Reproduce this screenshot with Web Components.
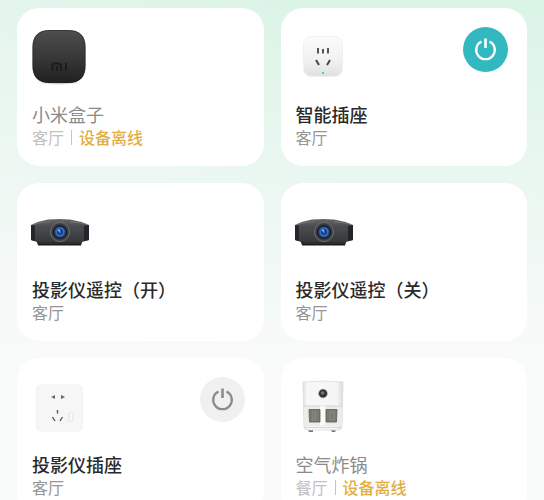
<!DOCTYPE html>
<html lang="zh-CN">
<head>
<meta charset="utf-8">
<meta name="viewport" content="width=device-width, initial-scale=1">
<title>智能家居</title>
<style>
  body { margin: 0; font-family: "Noto Sans CJK SC", sans-serif; background: #f9fafa; }
</style>
</head>
<body>
<device-grid>
  <device-card name="小米盒子" room="客厅" offline><device-icon kind="box" slot="icon"></device-icon></device-card>
  <device-card name="智能插座" room="客厅"><device-icon kind="plug" slot="icon"></device-icon><power-button slot="action" label="智能插座" on></power-button></device-card>
  <device-card name="投影仪遥控（开）" room="客厅"><device-icon kind="projector" slot="icon"></device-icon></device-card>
  <device-card name="投影仪遥控（关）" room="客厅"><device-icon kind="projector" slot="icon"></device-icon></device-card>
  <device-card name="投影仪插座" room="客厅"><device-icon kind="socket" slot="icon"></device-icon><power-button slot="action" label="投影仪插座"></power-button></device-card>
  <device-card name="空气炸锅" room="餐厅" offline><device-icon kind="fryer" slot="icon"></device-icon></device-card>
</device-grid>

<script>
const ICONS = {
  box: `
    <defs>
      <linearGradient id="b" x2="0" y2="1"><stop stop-color="#505050"/><stop offset=".12" stop-color="#484848"/><stop offset=".6" stop-color="#343434"/><stop offset="1" stop-color="#202020"/></linearGradient>
      <radialGradient id="s"><stop stop-color="#000" stop-opacity=".4"/><stop offset="1" stop-color="#000" stop-opacity="0"/></radialGradient>
    </defs>
    <ellipse cx="29" cy="55" rx="22" ry="3" fill="url(#s)"/>
    <path d="M20 3H38C50 3 55.500 9 55.500 20V39C55.500 50 50 56 38 56H20C8 56 2.500 50 2.500 39V20C2.500 9 8 3 20 3Z" fill="url(#b)"/>
    <path d="M20 3.500H38C49.500 3.500 55 9.500 55 20V39C55 49.500 49.500 55.500 38 55.500H20C8.500 55.500 3 49.500 3 39V20C3 9.500 8.500 3.500 20 3.500Z" fill="none" stroke="#222" stroke-opacity=".5"/>
    <path d="M22.500 44V36.500H28Q31 36.500 31 39V44M27 39V44M36 36V44" fill="none" stroke="#1c1c1c" stroke-width="1.900"/>`,
  plug: `
    <defs><linearGradient id="p" x2="0" y2="1"><stop stop-color="#fbfbfb"/><stop offset=".6" stop-color="#f1f1f1"/><stop offset="1" stop-color="#e0e0e0"/></linearGradient></defs>
    <rect x="9.500" y="9.500" width="39" height="40" rx="8" fill="url(#p)" stroke="#f0f0f0"/>
    <g stroke="#454545" stroke-width="1.800"><path d="M24 21V26.500M29 22V26.500M34 21V26.500"/><path d="M22 33L25 38M36 33L33 38" stroke-width="2"/></g>
    <circle cx="29" cy="46" r="1.100" fill="#3fc0b8"/>`,
  projector: `
    <defs>
      <linearGradient id="j" x2="0" y2="1"><stop stop-color="#66696b"/><stop offset=".3" stop-color="#4b4d50"/><stop offset="1" stop-color="#37383b"/></linearGradient>
      <radialGradient id="l"><stop stop-color="#86baf0"/><stop offset=".2" stop-color="#17356f"/><stop offset=".6" stop-color="#2b5eb0"/><stop offset="1" stop-color="#172447"/></radialGradient>
    </defs>
    <path d="M6 37H53L51 43.500H8Z" fill="#1b1c1e"/>
    <path d="M1 23Q9 19 18 17.500Q29 16.500 40 17.500Q50 19 59 23V38L52 40H7L1 38Z" fill="url(#j)"/>
    <path d="M1 23L5 24V39L1 38ZM54 24L59 23V38L54 39Z" fill="#242527"/>
    <path d="M3 22.500Q11 20 20 20M40 20Q50 20 57 22.500" fill="none" stroke="#7a7c7e" stroke-width=".7"/>
    <path d="M9 41H51" stroke="#484a4c" stroke-width=".8"/>
    <circle cx="30" cy="30" r="9.500" fill="#3b3d40" stroke="#707376"/>
    <circle cx="30" cy="30" r="6.500" fill="url(#l)" stroke="#17191d"/>
    <circle cx="30" cy="30" r="4" fill="none" stroke="#3f7bd0" stroke-width=".8"/>
    <circle cx="29" cy="28.500" r="1" fill="#a7d2ff"/>`,
  socket: `
    <rect x="6.500" y="8" width="46" height="46" rx="4" fill="#f6f6f6" stroke="#f3f3f3"/>
    <g fill="#666"><path d="M21 20L25 18V22ZM35 20L31 18V22Z"/></g>
    <g stroke="#555" stroke-width="1.400" fill="none"><path d="M27.500 33V36.500M22.500 40L25 44M32.500 40L30 44"/></g>
    <rect x="39" y="35.500" width="4" height="9" rx="1.500" fill="#f8f8f8" stroke="#e3e3e3"/>`,
  fryer: `
    <defs><linearGradient id="f"><stop stop-color="#dedede"/><stop offset=".1" stop-color="#f8f8f8"/><stop offset=".85" stop-color="#f5f5f5"/><stop offset="1" stop-color="#dadada"/></linearGradient></defs>
    <path d="M14 53H19V55H15ZM37 53H42L41 55H38Z" fill="#777"/>
    <path d="M9 5Q28 3 49 5L48 50Q48 53 44 53H14Q10 53 10 50Z" fill="url(#f)" stroke="#dcdcdc" stroke-width=".8"/>
    <path d="M10 29H48V49H10Z" fill="#ececec"/>
    <path d="M10 29H48M11 50.500H47" stroke="#cfcfcf" stroke-width=".8"/>
    <path d="M26 29H31V48H26Z" fill="#fafafa"/>
    <g fill="#7a7a74" stroke="#5c5c57" stroke-width=".8"><path d="M15 32.500H26V45H15.500ZM32 32.500H43L42.500 45H32Z"/></g>
    <path d="M19 33V44M21.500 33V44M36 35H40V43H36Z" stroke="#90908a" fill="none" stroke-width=".8"/>
    <circle cx="29" cy="16.500" r="4.300" fill="#303234" stroke="#8b8b8b" stroke-width=".5"/>
    <circle cx="28.500" cy="16" r="1.800" fill="#74777a"/>`
};

customElements.define('device-icon', class extends HTMLElement {
  connectedCallback() {
    this.attachShadow({ mode: 'open' }).innerHTML = `
      <style>:host { display: block; } svg { display: block; }</style>
      <svg width="60" height="60" viewBox="0 0 60 60" aria-hidden="true">${ICONS[this.getAttribute('kind')]}</svg>`;
  }
});

customElements.define('power-button', class extends HTMLElement {
  connectedCallback() {
    this.attachShadow({ mode: 'open' }).innerHTML = `
      <style>
        :host { display: block; --fill: #f0f0f0; --ink: #8b8b8b; }
        :host([on]) { --fill: #32b9bf; --ink: #fff; }
        button { display: grid; place-items: center; width: 45px; height: 45px; padding: 0; border: 0; border-radius: 50%; background: var(--fill); color: var(--ink); cursor: pointer; }
      </style>
      <button type="button" aria-label="${this.getAttribute('label')}电源" aria-pressed="${this.hasAttribute('on')}">
        <svg width="25" height="25" viewBox="0 0 25 25" fill="none" stroke="currentColor" stroke-width="2.300" aria-hidden="true">
          <path d="M8.500 4.500A9.300 9.300 0 1 0 16.500 4.500"/><path d="M12.500 1.500V11" stroke-width="2.600"/>
        </svg>
      </button>`;
    const button = this.shadowRoot.querySelector('button');
    button.addEventListener('click', () => button.setAttribute('aria-pressed', this.toggleAttribute('on')));
  }
});

customElements.define('device-card', class extends HTMLElement {
  connectedCallback() {
    const status = this.hasAttribute('offline') ? '<i></i><span class="status">设备离线</span>' : '';
    this.attachShadow({ mode: 'open' }).innerHTML = `
      <style>
        :host { display: block; padding: 19px 19px 18px 13px; border-radius: 22px; background: #fff; --title: #2a2a2a; --room: #969696; }
        :host([offline]) { --title: #8b8b8b; --room: #c0c0c0; }
        .top { display: flex; justify-content: space-between; align-items: flex-start; margin-bottom: 15px; }
        .text { padding-left: 2px; }
        h2, p { margin: 0; white-space: nowrap; }
        h2 { font-size: 18px; line-height: 24px; font-weight: 500; color: var(--title); }
        :host([offline]) h2 { font-weight: 400; }
        p { display: flex; align-items: center; font-size: 16px; line-height: 22px; color: var(--room); }
        i { width: 1px; height: 15px; margin: 0 7px; background: #c4c4c4; }
        .status { color: #e2ad42; font-weight: 500; }
      </style>
      <div class="top"><slot name="icon"></slot><slot name="action"></slot></div>
      <div class="text"><h2>${this.getAttribute('name')}</h2><p><span>${this.getAttribute('room')}</span>${status}</p></div>`;
  }
});

customElements.define('device-grid', class extends HTMLElement {
  connectedCallback() {
    this.attachShadow({ mode: 'open' }).innerHTML = `
      <style>
        :host { display: grid; grid-template-columns: repeat(2, minmax(0, 1fr)); gap: 17px; padding: 8px 17px;
          background: linear-gradient(#f9fafa00, #f9fafa 360px), linear-gradient(90deg, #e4f5ec, #dcf4e7 50%, #daf4e6); }
      </style>
      <slot></slot>`;
  }
});
</script>
</body>
</html>
